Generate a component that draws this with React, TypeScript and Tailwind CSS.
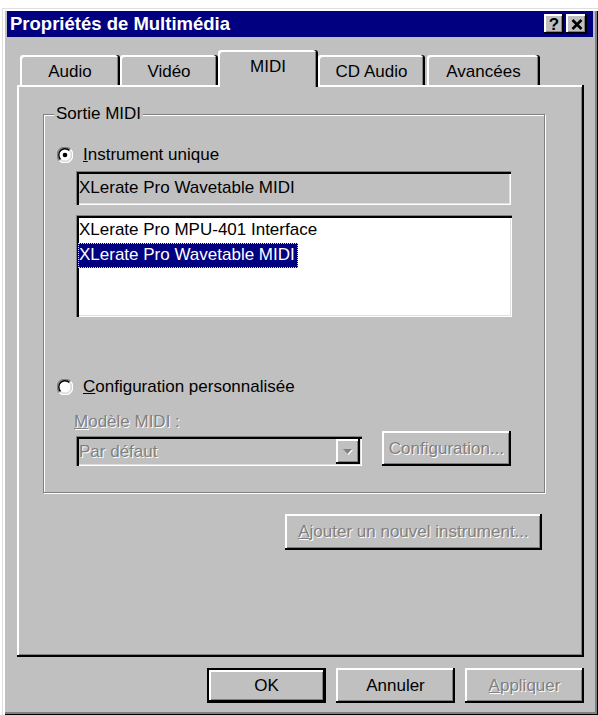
import React from 'react';

const raised =
  'shadow-[inset_-2px_-2px_0_#000,inset_2px_2px_0_#fff,inset_-3px_-3px_0_#808080]';
const sunken =
  'shadow-[inset_1px_1px_0_#808080,inset_3px_3px_0_#000,inset_-1px_-1px_0_#fff,inset_-2px_-2px_0_#dfdfdf]';
const disabledText = 'text-[#808080] [text-shadow:1px_1px_0_#fff]';

function Radio({ checked }: { checked: boolean }) {
  return (
    <svg width="16" height="16" viewBox="0 0 16 16" className="shrink-0">
      <circle cx="8" cy="8" r="6" fill="#fff" />
      <path d="M2.5 13.5 A7.3 7.3 0 0 1 13.5 2.5" fill="none" stroke="#808080" strokeWidth="1.4" />
      <path d="M13.5 2.5 A7.3 7.3 0 0 1 2.5 13.5" fill="none" stroke="#fff" strokeWidth="1.4" />
      <path d="M3.6 12.4 A6 6 0 0 1 12.4 3.6" fill="none" stroke="#000" strokeWidth="1.4" />
      <path d="M12.4 3.6 A6 6 0 0 1 3.6 12.4" fill="none" stroke="#dfdfdf" strokeWidth="1.4" />
      {checked && <circle cx="8" cy="8" r="2.3" fill="#000" />}
    </svg>
  );
}

function Tab({ label, width, selected, className = '' }: { label: string; width: number; selected?: boolean; className?: string }) {
  if (selected) {
    return (
      <div
        style={{ width }}
        className={`relative z-10 -mb-[2px] h-[37px] rounded-t-[3px] bg-[#c0c0c0] pt-[7px] text-center shadow-[inset_-2px_0_0_#000,inset_2px_2px_0_#fff,inset_-3px_0_0_#808080] ${className}`}
      >
        {label}
      </div>
    );
  }
  return (
    <div
      style={{ width }}
      className={`h-[30px] rounded-t-[3px] bg-[#c0c0c0] pt-[7px] text-center shadow-[inset_-2px_0_0_#000,inset_2px_2px_0_#fff,inset_-3px_0_0_#808080] ${className}`}
    >
      {label}
    </div>
  );
}

export default function App() {
  return (
    <div className="min-h-screen bg-white pl-[2px] pt-[8px] font-['Liberation_Sans',Arial,sans-serif] text-[17px] leading-[20px] text-black">
      <div className="h-[707px] w-[596px] bg-[#c0c0c0] px-[5px] pt-[3px] shadow-[inset_1px_1px_0_#dfdfdf,inset_3px_3px_0_#fff,inset_-1px_-1px_0_#000,inset_-3px_-3px_0_#808080]">
        {/* Title bar */}
        <div className="flex h-[26px] items-center bg-[#000080] pl-[3px] pr-[6px]">
          <span className="flex-1 text-[18.5px] font-bold text-white">Propriétés de Multimédia</span>
          <div className="flex gap-[2px]">
            <div className={`flex h-[20px] w-[20px] items-center justify-center bg-[#c0c0c0] text-[17px] font-bold leading-none ${raised}`}>
              ?
            </div>
            <div className={`flex h-[20px] w-[21px] items-center justify-center bg-[#c0c0c0] ${raised}`}>
              <svg width="12" height="11" viewBox="0 0 12 11">
                <path d="M1.5 1 L10.5 10 M10.5 1 L1.5 10" stroke="#000" strokeWidth="2.6" />
              </svg>
            </div>
          </div>
        </div>

        <div className="pl-[10px] pr-[9px] pt-[13px]">
          {/* Tabs */}
          <div className="flex h-[35px] items-end pl-[3px]">
            <Tab label="Audio" width={100} />
            <Tab label="Vidéo" width={98} />
            <Tab label="MIDI" width={100} selected />
            <Tab label="CD Audio" width={107} />
            <Tab label="Avancées" width={113} className="ml-[2px]" />
          </div>

          {/* Panel */}
          <div className={`h-[572px] bg-[#c0c0c0] pl-[26px] pt-[29px] ${raised}`}>
            <div className="relative flex h-[379px] w-[502px] flex-col border border-[#808080] pb-[26px] pt-[30px] shadow-[inset_1px_1px_0_#fff,1px_1px_0_#fff]">
              <span className="absolute -top-[11px] left-[10px] bg-[#c0c0c0] px-[2px]">Sortie MIDI</span>

              <div className="flex h-[20px] items-center gap-[10px] pl-[13px]">
                <Radio checked />
                <span>
                  <u>I</u>nstrument unique
                </span>
              </div>

              <div className={`ml-[32px] mt-[6px] flex h-[34px] w-[435px] items-center bg-[#c0c0c0] pl-[3px] pt-[1px] ${sunken}`}>
                XLerate Pro Wavetable MIDI
              </div>

              <div className={`ml-[32px] mt-[10px] flex h-[103px] w-[436px] flex-col bg-white pl-[2px] pt-[3px] ${sunken}`}>
                <div className="flex h-[25px] items-center pl-[1px]">XLerate Pro MPU-401 Interface</div>
                <div className="flex h-[25px]">
                  <span className="flex items-center border border-dotted border-[#e8e060] bg-[#000080] pr-[2px] text-white">
                    XLerate Pro Wavetable MIDI
                  </span>
                </div>
              </div>

              <div className="mt-[60px] flex h-[20px] items-center gap-[10px] pl-[13px]">
                <Radio checked={false} />
                <span>
                  <u>C</u>onfiguration personnalisée
                </span>
              </div>

              <div className={`ml-[30px] mt-[15px] h-[20px] ${disabledText}`}>
                <u>M</u>odèle MIDI :
              </div>

              <div className="-mt-px flex h-[35px] items-end pl-[32px]">
                <div className={`flex h-[30px] w-[286px] items-center justify-between bg-[#c0c0c0] pl-[3px] pr-[2px] pt-[1px] ${sunken}`}>
                  <span className={disabledText}>Par défaut</span>
                  <div className={`flex h-[25px] w-[24px] items-center justify-center bg-[#c0c0c0] ${raised}`}>
                    <svg width="12" height="8" viewBox="0 0 12 8">
                      <path d="M1 1 L10 1 L5.5 6 Z" fill="#fff" transform="translate(1 1)" />
                      <path d="M1 1 L10 1 L5.5 6 Z" fill="#808080" />
                    </svg>
                  </div>
                </div>
                <div className={`ml-[20px] flex h-[35px] w-[129px] items-center justify-center bg-[#c0c0c0] ${raised}`}>
                  <span className={disabledText}>
                    Confi<u>g</u>uration...
                  </span>
                </div>
              </div>
            </div>

            <div className={`ml-[242px] mt-[21px] flex h-[36px] w-[257px] items-center justify-center bg-[#c0c0c0] ${raised}`}>
              <span className={disabledText}>
                <u>A</u>jouter un nouvel instrument...
              </span>
            </div>
          </div>

          {/* Dialog buttons */}
          <div className="mt-[11px] flex justify-end gap-[10px]">
            <div className="flex h-[35px] w-[119px] items-center justify-center border-2 border-black bg-[#c0c0c0] shadow-[inset_-1px_-1px_0_#000,inset_2px_2px_0_#fff,inset_-2px_-2px_0_#808080]">
              OK
            </div>
            <div className={`flex h-[35px] w-[119px] items-center justify-center bg-[#c0c0c0] ${raised}`}>Annuler</div>
            <div className={`flex h-[35px] w-[119px] items-center justify-center bg-[#c0c0c0] ${raised}`}>
              <span className={disabledText}>
                <u>A</u>ppliquer
              </span>
            </div>
          </div>
        </div>
      </div>
    </div>
  );
}
